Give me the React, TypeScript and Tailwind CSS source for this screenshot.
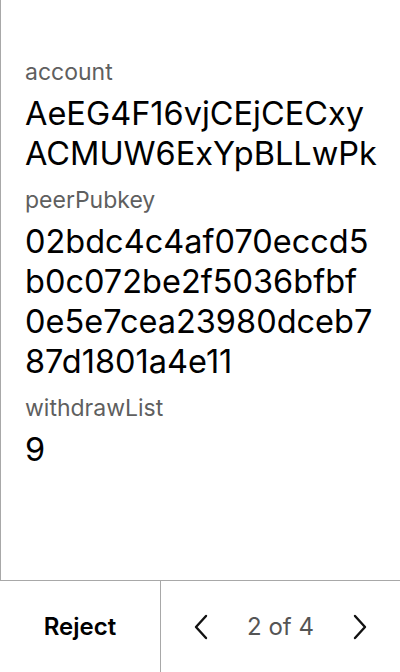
import React from 'react';

const fields = [
  { label: 'account', lines: ['AeEG4F16vjCEjCECxy', 'ACMUW6ExYpBLLwPk'] },
  {
    label: 'peerPubkey',
    lines: ['02bdc4c4af070eccd5', 'b0c072be2f5036bfbf', '0e5e7cea23980dceb7', '87d1801a4e11'],
  },
  { label: 'withdrawList', lines: ['9'] },
];

const Chevron = ({ dir }: { dir: 'left' | 'right' }) => (
  <svg width="14" height="26" viewBox="0 0 14 26" fill="none" stroke="#111" strokeWidth="2.4" strokeLinecap="round" strokeLinejoin="round">
    {dir === 'left' ? <path d="M12 2 L2 13 L12 24" /> : <path d="M2 2 L12 13 L2 24" />}
  </svg>
);

export default function App() {
  return (
    <div className="flex h-[672px] w-[400px] flex-col bg-white font-['Inter',sans-serif] text-black">
      <div className="flex-1 border-l border-[#a8a8a8] px-6 pt-[58px]">
        {fields.map((f) => (
          <div key={f.label} className="mb-3">
            <div className="mb-2 text-[23px] leading-[28px] text-[#5f5f5f]">{f.label}</div>
            <div className="text-[32.5px] leading-10">
              {f.lines.map((l) => (
                <div key={l}>{l}</div>
              ))}
            </div>
          </div>
        ))}
      </div>
      <div className="flex h-[92px] border-t border-[#a8a8a8]">
        <button className="flex w-[160px] items-center justify-center text-[24px] font-semibold">
          Reject
        </button>
        <div className="flex flex-1 items-center justify-between border-l border-[#a8a8a8] pl-[33px] pr-[33px]">
          <Chevron dir="left" />
          <span className="text-[24px] text-[#555]">2 of 4</span>
          <Chevron dir="right" />
        </div>
      </div>
    </div>
  );
}
